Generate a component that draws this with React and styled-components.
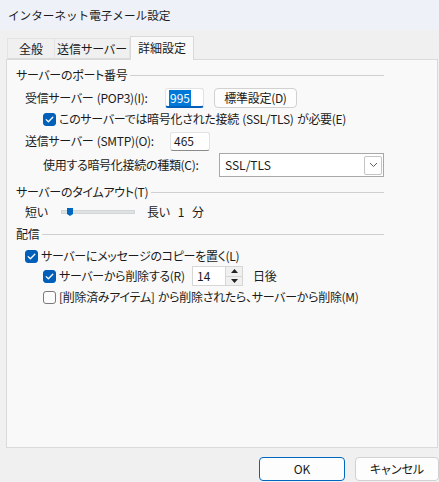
import React from "react";
import styled, { createGlobalStyle } from "styled-components";

const Global = createGlobalStyle`
  html, body { margin: 0; padding: 0; background: #f0f0f0; }
  body {
    font-family: "Noto Sans CJK JP", "Noto Sans", sans-serif;
    font-size: 12px;
    color: #1b1b1b;
    font-feature-settings: "palt";
  }
  * { box-sizing: border-box; }
`;

const Window = styled.div`
  width: 439px;
  height: 482px;
  display: flex;
  flex-direction: column;
  overflow: hidden;
  background: #f0f0f0;
`;

const TitleBar = styled.div`
  height: 30px;
  flex: none;
  display: flex;
  align-items: center;
  padding: 0 0 1px 8px;
  background: #eef1f7;
  font-size: 11.6px;
  font-feature-settings: normal;
  line-height: 16px;
  color: #1a1a1a;
`;

const Body = styled.div`
  flex: 1;
  display: flex;
  flex-direction: column;
  padding: 6px 0 0 6px;
`;

const TabStrip = styled.div`
  height: 23px;
  display: flex;
  align-items: flex-end;
  padding-left: 1px;
`;

const Tab = styled.div`
  height: ${(p) => (p.$active ? "24px" : "21px")};
  width: ${(p) => p.$w}px;
  margin-bottom: ${(p) => (p.$active ? "-1px" : "0")};
  display: flex;
  align-items: center;
  justify-content: center;
  padding-bottom: ${(p) => (p.$active ? "1px" : "0")};
  background: ${(p) => (p.$active ? "#f9f9f9" : "#f0f0f0")};
  border: 1px solid ${(p) => (p.$active ? "#d9d9d9" : "#e3e3e3")};
  border-bottom: ${(p) => (p.$active ? "none" : "1px solid #d9d9d9")};
  border-left: ${(p) => (p.$first || p.$active ? "" : "none")};
  position: relative;
  z-index: ${(p) => (p.$active ? 1 : 0)};
  font-size: 12px;
  line-height: 16px;
  color: #1a1a1a;
`;

const Panel = styled.div`
  width: 432px;
  height: 389px;
  flex: none;
  background: #f9f9f9;
  border: 1px solid #dadada;
  padding: 6px 0 0 9px;
  display: flex;
  flex-direction: column;
  letter-spacing: -0.3px;
  word-spacing: 1px;
`;

const Content = styled.div`
  width: 368px;
  display: flex;
  flex-direction: column;
`;

const GroupHeader = styled.div`
  height: 18px;
  margin-top: ${(p) => p.$mt || 0}px;
  display: flex;
  align-items: center;
  gap: 3px;
  line-height: 16px;
  &::after {
    content: "";
    flex: 1;
    height: 1px;
    background: #cfcfcf;
    margin-top: 1px;
  }
`;

const Row = styled.div`
  height: ${(p) => p.$h || 18}px;
  margin-top: ${(p) => p.$mt || 0}px;
  padding-left: ${(p) => p.$indent || 0}px;
  display: flex;
  align-items: center;
  line-height: 16px;
  white-space: nowrap;
`;

const Label = styled.span`
  width: ${(p) => (p.$w ? `${p.$w}px` : "auto")};
  margin-left: ${(p) => p.$ml || 0}px;
  flex: none;
  white-space: nowrap;
`;

const TextBox = styled.div`
  width: ${(p) => p.$w}px;
  height: ${(p) => p.$h || 19}px;
  background: #ffffff;
  border: 1px solid #e2e2e2;
  border-bottom: ${(p) => (p.$focus ? "2px solid #005fb8" : "1px solid #8a8a8a")};
  border-radius: 3px;
  display: flex;
  align-items: center;
  padding-left: 3px;
  line-height: 16px;
  letter-spacing: 0;
`;

const Selected = styled.span`
  background: #0078d7;
  color: #ffffff;
  padding: 0 1px;
`;

const Button = styled.div`
  width: ${(p) => p.$w}px;
  height: ${(p) => p.$h || 20}px;
  margin-left: ${(p) => p.$ml || 0}px;
  background: #fdfdfd;
  border: 1px solid ${(p) => (p.$default ? "#0067c0" : "#d1d1d1")};
  border-radius: 4px;
  display: flex;
  align-items: center;
  justify-content: center;
  line-height: 16px;
  color: #1a1a1a;
  flex: none;
`;

const Select = styled.div`
  width: 166px;
  height: 24px;
  background: #ffffff;
  border: 1px solid #a8a8a8;
  display: flex;
  align-items: center;
  justify-content: space-between;
  padding: 0 1px 0 5px;
  letter-spacing: 0;
`;

const DropBtn = styled.div`
  width: 18px;
  height: 19px;
  border: 1px solid #c4c4c4;
  border-radius: 2px;
  display: flex;
  align-items: center;
  justify-content: center;
`;

const Check = styled.div`
  width: 13px;
  height: 13px;
  flex: none;
  border-radius: 3px;
  background: ${(p) => (p.$on ? "#005fb8" : "#fbfbfb")};
  border: 1px solid ${(p) => (p.$on ? "#005fb8" : "#7a7a7a")};
  display: flex;
  align-items: center;
  justify-content: center;
  margin-right: 3px;
`;

const Track = styled.div`
  width: 74px;
  height: 4px;
  flex: none;
  background: #dfe2e2;
  border: 1px solid #d3d6d6;
  display: flex;
  align-items: center;
  padding-left: 5px;
`;

const Thumb = styled.svg`
  display: block;
  flex: none;
`;

const Spinner = styled.div`
  width: 51px;
  height: 20px;
  margin-left: ${(p) => p.$ml || 0}px;
  background: #ffffff;
  border: 1px solid #d6d6d6;
  display: flex;
  align-items: stretch;
  flex: none;
  letter-spacing: 0;
`;

const SpinText = styled.div`
  flex: 1;
  display: flex;
  align-items: center;
  padding-left: 4px;
`;

const SpinButtons = styled.div`
  width: 17px;
  display: flex;
  flex-direction: column;
  border-left: 1px solid #d6d6d6;
`;

const SpinBtn = styled.div`
  flex: 1;
  display: flex;
  align-items: center;
  justify-content: center;
  background: #f0f0f0;
  border-top: ${(p) => (p.$down ? "1px solid #d6d6d6" : "none")};
`;

const Footer = styled.div`
  display: flex;
  justify-content: flex-end;
  gap: 10px;
  padding: 9px 0 0 0;
`;

const CheckMark = () => (
  <svg width="9" height="9" viewBox="0 0 9 9">
    <polyline points="1.2,4.6 3.4,6.8 7.8,2.2" fill="none" stroke="#fff" strokeWidth="1.3" strokeLinecap="round" strokeLinejoin="round" />
  </svg>
);

const CheckBox = ({ on }) => <Check $on={on}>{on && <CheckMark />}</Check>;

export default function App() {
  return (
    <>
      <Global />
      <Window>
        <TitleBar>インターネット電子メール設定</TitleBar>
        <Body>
          <TabStrip>
            <Tab $first $w={48}>全般</Tab>
            <Tab $w={75}>送信サーバー</Tab>
            <Tab $active $w={64}>詳細設定</Tab>
          </TabStrip>
          <Panel>
            <Content>
              <GroupHeader>サーバーのポート番号</GroupHeader>
              <Row $h={20} $mt={4} $indent={9}>
                <Label $w={140}>受信サーバー (POP3)(I):</Label>
                <TextBox $w={39} $h={20} $focus>
                  <Selected>995</Selected>
                </TextBox>
                <Button $w={83} $h={20} $ml={10}>標準設定(D)</Button>
              </Row>
              <Row $mt={2} $indent={27}>
                <CheckBox on />
                <Label>このサーバーでは暗号化された接続 (SSL/TLS) が必要(E)</Label>
              </Row>
              <Row $h={20} $mt={3} $indent={9}>
                <Label $w={145}>送信サーバー (SMTP)(O):</Label>
                <TextBox $w={40} $h={19}>465</TextBox>
              </Row>
              <Row $h={24} $mt={2} $indent={27}>
                <Label $w={176}>使用する暗号化接続の種類(C):</Label>
                <Select>
                  <span>SSL/TLS</span>
                  <DropBtn>
                    <svg width="9" height="6" viewBox="0 0 9 6">
                      <polyline points="1,1 4.5,4.5 8,1" fill="none" stroke="#606060" strokeWidth="1" />
                    </svg>
                  </DropBtn>
                </Select>
              </Row>
              <GroupHeader $mt={6}>サーバーのタイムアウト(T)</GroupHeader>
              <Row $mt={2} $indent={9}>
                <Label $w={36}>短い</Label>
                <Track>
                  <Thumb width="6" height="8" viewBox="0 0 6 8">
                    <polygon points="0,0 6,0 6,6 3,8 0,6" fill="#0067c0" />
                  </Thumb>
                </Track>
                <Label $ml={12}>長い</Label>
                <Label $ml={8}>1</Label>
                <Label $ml={8}>分</Label>
              </Row>
              <GroupHeader $mt={4}>配信</GroupHeader>
              <Row $mt={4} $indent={9}>
                <CheckBox on />
                <Label>サーバーにメッセージのコピーを置く(L)</Label>
              </Row>
              <Row $h={20} $mt={1} $indent={27}>
                <CheckBox on />
                <Label $w={133}>サーバーから削除する(R)</Label>
                <Spinner>
                  <SpinText>14</SpinText>
                  <SpinButtons>
                    <SpinBtn>
                      <svg width="7" height="4" viewBox="0 0 7 4"><polygon points="0,4 7,4 3.5,0" fill="#222" /></svg>
                    </SpinBtn>
                    <SpinBtn $down>
                      <svg width="7" height="4" viewBox="0 0 7 4"><polygon points="0,0 7,0 3.5,4" fill="#222" /></svg>
                    </SpinBtn>
                  </SpinButtons>
                </Spinner>
                <Label $ml={10}>日後</Label>
              </Row>
              <Row $mt={2} $indent={27}>
                <CheckBox />
                <Label>[削除済みアイテム] から削除されたら、サーバーから削除(M)</Label>
              </Row>
            </Content>
          </Panel>
          <Footer>
            <Button $default $w={86} $h={24}>OK</Button>
            <Button $w={84} $h={24}>キャンセル</Button>
          </Footer>
        </Body>
      </Window>
    </>
  );
}
